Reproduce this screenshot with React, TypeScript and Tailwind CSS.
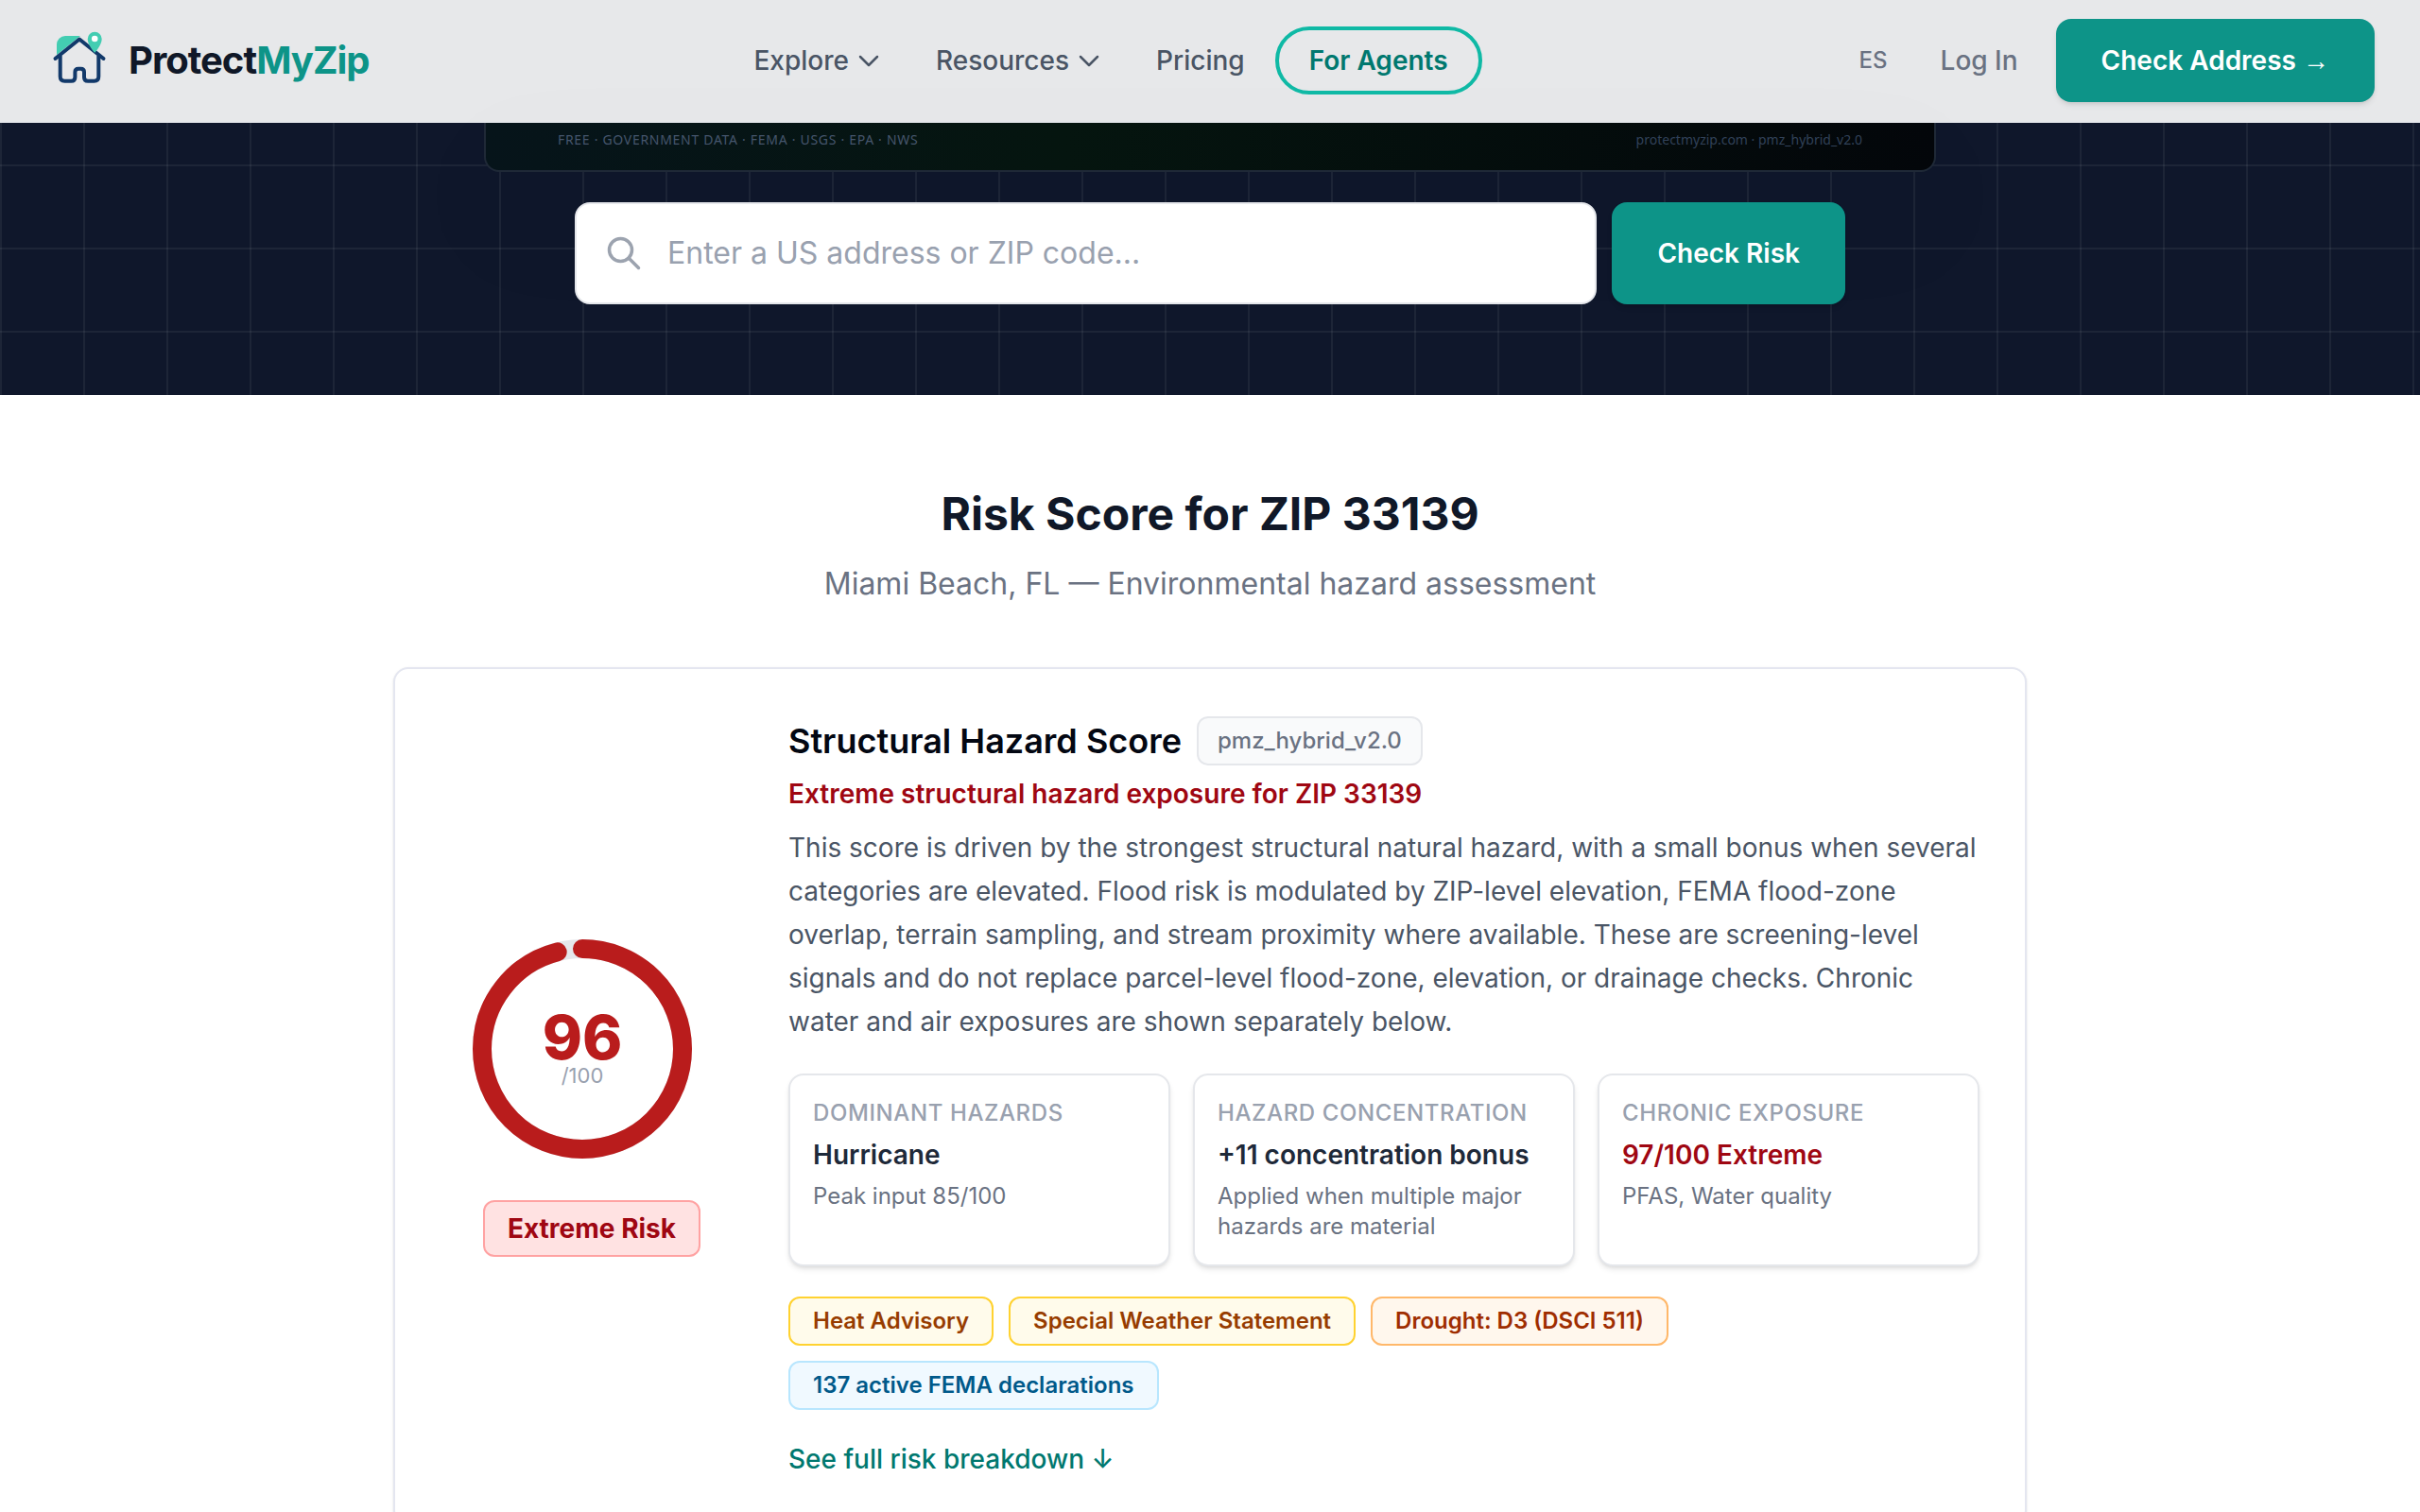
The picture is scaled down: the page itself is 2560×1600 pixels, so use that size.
import React from 'react';
import clsx from 'clsx';

const STATS = [
  { label: 'Dominant hazards', value: 'Hurricane', note: 'Peak input 85/100', tone: 'text-gray-800' },
  {
    label: 'Hazard concentration',
    value: '+11 concentration bonus',
    note: 'Applied when multiple major hazards are material',
    tone: 'text-gray-800',
  },
  { label: 'Chronic exposure', value: '97/100 Extreme', note: 'PFAS, Water quality', tone: 'text-red-800' },
];

const ALERTS = [
  { text: 'Heat Advisory', tone: 'border-amber-300 bg-amber-50 text-amber-800' },
  { text: 'Special Weather Statement', tone: 'border-amber-300 bg-amber-50 text-amber-800' },
  { text: 'Drought: D3 (DSCI 511)', tone: 'border-orange-300 bg-orange-50 text-orange-800' },
  { text: '137 active FEMA declarations', tone: 'border-sky-200 bg-sky-50 text-sky-800' },
];

const Logo: React.FC = () => (
  <a href="#" className="flex items-center gap-4">
    <svg viewBox="0 0 72 72" className="size-[72px]" fill="none" aria-hidden="true">
      <path d="M12 30V19a9 9 0 0 1 9-9h16L12 30Z" fill="#43cdb2" />
      <path
        d="M10.500 34 36 13.500 61.500 34M15.700 31v22q0 4.700 4.700 4.700h7q4 0 4-4v-5.500q0-3.500 3.500-3.500h2.600q3.500 0 3.500 3.500v5.500q0 4 4 4h6.600q4.700 0 4.700-4.700V31"
        stroke="#12396a"
        strokeWidth="4"
        strokeLinecap="round"
        strokeLinejoin="round"
      />
      <path
        d="M52.200 5.700a7.500 7.500 0 0 1 7.500 7.500c0 6.500-7.500 14.500-7.500 14.500s-7.500-8-7.500-14.500a7.500 7.500 0 0 1 7.500-7.500Z"
        fill="#43cdb2"
      />
      <circle cx="52.200" cy="13" r="3.300" fill="#fff" />
    </svg>
    <span className="text-[40px] leading-[56px] font-bold tracking-tight text-gray-900">
      Protect<span className="text-[#0d9488]">MyZip</span>
    </span>
  </a>
);

const Chevron: React.FC = () => (
  <svg viewBox="0 0 22 22" className="size-[22px]" fill="none" stroke="currentColor" strokeWidth="2.5" strokeLinecap="round" strokeLinejoin="round" aria-hidden="true">
    <path d="m2 7 9 9 9-9" />
  </svg>
);

const Header: React.FC = () => (
  <header className="flex h-[130px] items-center justify-between border-b-2 border-[#e5e7eb] bg-[#e7e8ea] px-12">
    <Logo />
    <nav className="flex items-center gap-1 text-[28px] leading-10 font-medium text-gray-600">
      <button type="button" className="flex items-center gap-[10px] px-7">
        Explore <Chevron />
      </button>
      <button type="button" className="flex items-center gap-[10px] px-7">
        Resources <Chevron />
      </button>
      <a href="#pricing" className="px-7">Pricing</a>
      <a href="#agents" className="rounded-full border-4 border-[#0fb9a5] px-8 py-3 font-semibold text-teal-700">
        For Agents
      </a>
    </nav>
    <div className="flex items-center text-[28px] leading-10 font-medium text-gray-500">
      <button type="button" className="px-5 text-2xl">ES</button>
      <a href="#login" className="pr-10 pl-9">Log In</a>
      <a href="#check" className="rounded-2xl bg-[#0d9488] px-12 py-6 font-semibold text-white shadow-md">
        Check Address <span className="font-['Liberation_Sans',sans-serif] leading-none">→</span>
      </a>
    </div>
  </header>
);

const Hero: React.FC = () => (
  <section className="bg-slate-900 bg-[linear-gradient(rgba(255,255,255,0.06)_2px,transparent_2px),linear-gradient(90deg,rgba(255,255,255,0.06)_2px,transparent_2px)] bg-[size:88px_88px] bg-[position:0_44px] pb-24">
    <div className="mx-auto flex h-[52px] max-w-[1536px] items-start justify-between rounded-b-2xl border-2 border-t-0 border-[#1f2937] bg-[linear-gradient(90deg,#06141a,#05150f_40%,#03060a)] px-[76px] pt-2 font-['Noto_Sans',sans-serif] text-sm leading-5 text-slate-600 shadow-[0_50px_100px_-24px_rgba(0,0,0,0.5)]">
      <span className="tracking-wider">FREE · GOVERNMENT DATA · FEMA · USGS · EPA · NWS</span>
      <span className="text-slate-700">protectmyzip.com · pmz_hybrid_v2.0</span>
    </div>
    <form className="mx-auto mt-8 flex max-w-[1344px] gap-4" onSubmit={(e) => e.preventDefault()}>
      <label className="flex h-[108px] flex-1 items-center gap-7 rounded-2xl border-2 border-gray-200 bg-white pl-8">
        <svg viewBox="0 0 36 36" className="size-9" fill="none" stroke="#9ca3af" strokeWidth="3.5" strokeLinecap="round" aria-hidden="true">
          <circle cx="14.500" cy="14.500" r="12" />
          <path d="m23 23 10.500 10.500" />
        </svg>
        <input
          type="text"
          aria-label="US address or ZIP code"
          placeholder="Enter a US address or ZIP code..."
          className="min-w-0 flex-1 text-[32px] leading-[48px] outline-none placeholder:text-gray-400"
        />
      </label>
      <button type="submit" className="rounded-2xl bg-[#0d9488] px-12 text-[28px] leading-10 font-semibold text-white shadow-md">
        Check Risk
      </button>
    </form>
  </section>
);

const ScoreRing: React.FC<{ score: number }> = ({ score }) => (
  <div className="w-[260px]">
    <div className="grid size-[240px] place-items-center">
      <svg viewBox="0 0 240 240" className="col-start-1 row-start-1 size-full" fill="none" strokeWidth="20" aria-hidden="true">
        <circle cx="120" cy="120" r="106" stroke="#e5e7eb" />
        <circle
          cx="120"
          cy="120"
          r="106"
          stroke="#b91c1c"
          strokeLinecap="round"
          pathLength="100"
          strokeDasharray={`${score} 100`}
          transform="rotate(-90 120 120)"
        />
      </svg>
      <div className="col-start-1 row-start-1 text-center">
        <div className="text-[64px] leading-[56px] font-extrabold text-[#b91c1c]">{score}</div>
        <div className="text-[22px] leading-6 text-gray-400">/100</div>
      </div>
    </div>
  </div>
);

const ScoreCard: React.FC = () => (
  <article className="mx-auto flex max-w-[1728px] items-center gap-12 rounded-2xl border-2 border-[#e4e6f0] bg-white p-12 shadow-sm">
    <div className="flex w-80 shrink-0 flex-col items-center gap-10">
      <ScoreRing score={96} />
      <span className="rounded-xl border-2 border-red-300 bg-red-100 px-6 py-2 text-[28px] leading-10 font-bold text-red-800">
        Extreme Risk
      </span>
    </div>
    <div className="min-w-0 flex-1">
      <div className="flex h-14 items-center gap-4">
        <h3 className="text-4xl leading-[56px] font-semibold text-gray-950">Structural Hazard Score</h3>
        <span className="rounded-xl border-2 border-gray-200 bg-gray-50 px-5 py-2 text-2xl leading-8 font-medium text-gray-500">
          pmz_hybrid_v2.0
        </span>
      </div>
      <p className="mt-2 text-[28px] leading-10 font-semibold text-red-800">
        Extreme structural hazard exposure for ZIP 33139
      </p>
      <p className="mt-3.5 text-[28px] leading-[46px] text-gray-600">
        This score is driven by the strongest structural natural hazard, with a small bonus when several categories are
        elevated. Flood risk is modulated by ZIP-level elevation, FEMA flood-zone overlap, terrain sampling, and stream
        proximity where available. These are screening-level signals and do not replace parcel-level flood-zone,
        elevation, or drainage checks. Chronic water and air exposures are shown separately below.
      </p>
      <div className="mt-8 grid grid-cols-3 gap-6">
        {STATS.map((stat) => (
          <div key={stat.label} className="rounded-2xl border-2 border-gray-200 bg-white p-6 shadow-md">
            <div className="text-2xl leading-8 font-medium tracking-wide text-gray-400 uppercase">{stat.label}</div>
            <div className={clsx('mt-2 text-[28px] leading-10 font-semibold', stat.tone)}>{stat.value}</div>
            <div className="mt-2 text-2xl leading-8 text-gray-500">{stat.note}</div>
          </div>
        ))}
      </div>
      <ul className="mt-8 flex flex-wrap gap-4">
        {ALERTS.map((alert) => (
          <li key={alert.text} className={clsx('rounded-xl border-2 px-6 py-2 text-2xl leading-8 font-semibold', alert.tone)}>
            {alert.text}
          </li>
        ))}
      </ul>
      <a href="#breakdown" className="mt-8 inline-block text-[28px] leading-10 font-medium text-teal-700">
        See full risk breakdown ↓
      </a>
    </div>
  </article>
);

export default function App() {
  return (
    <div className="bg-white font-['Inter',sans-serif]">
      <Header />
      <Hero />
      <main className="px-12 pt-24 pb-24">
        <div className="mb-16 text-center">
          <h2 className="text-5xl leading-[60px] font-bold text-gray-900">Risk Score for ZIP 33139</h2>
          <p className="mt-5 text-[32px] leading-[48px] text-gray-500">
            Miami Beach, FL — Environmental hazard assessment
          </p>
        </div>
        <ScoreCard />
      </main>
    </div>
  );
}
